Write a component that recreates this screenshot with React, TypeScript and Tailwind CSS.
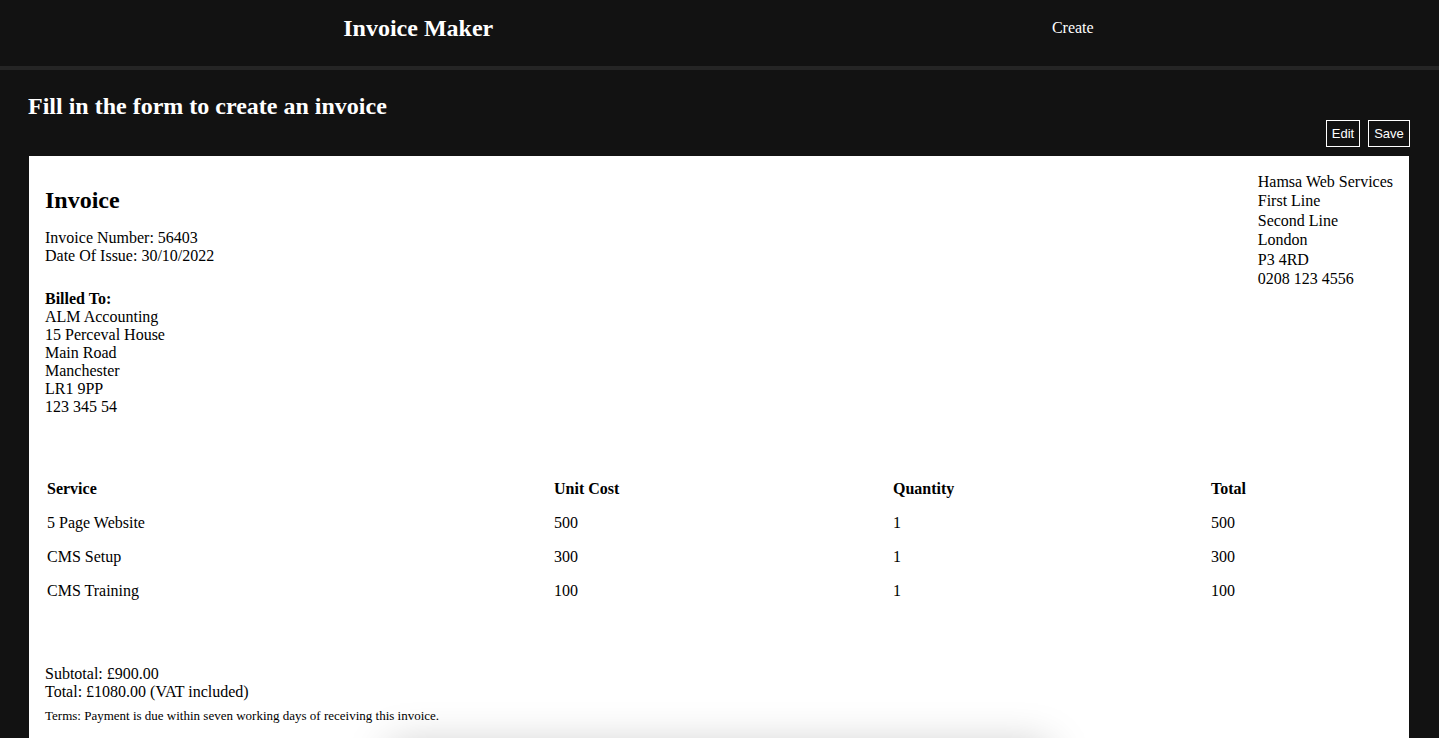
import React from 'react';

const serif = { fontFamily: '"Liberation Serif", "Times New Roman", serif' };

const items = [
  { service: '5 Page Website', cost: 500, qty: 1, total: 500 },
  { service: 'CMS Setup', cost: 300, qty: 1, total: 300 },
  { service: 'CMS Training', cost: 100, qty: 1, total: 100 },
];

const sender = ['Hamsa Web Services', 'First Line', 'Second Line', 'London', 'P3 4RD', '0208 123 4556'];
const billedTo = ['ALM Accounting', '15 Perceval House', 'Main Road', 'Manchester', 'LR1 9PP', '123 345 54'];

function Header() {
  return (
    <header className="grid h-[70px] grid-cols-2 border-b-4 border-[#252525] pl-[91px] pr-[39px] pb-[10px] text-white">
      <div className="flex items-center justify-center">
        <h1 className="text-[24px] font-bold leading-[28px]">Invoice Maker</h1>
      </div>
      <nav className="flex items-center justify-center">
        <a className="text-[16px] leading-[18px]">Create</a>
      </nav>
    </header>
  );
}

function InvoiceTable() {
  const cols = 'grid grid-cols-[507px_339px_318px_1fr] h-[34px] items-center pl-[2px]';
  return (
    <div className="mt-[56px]">
      <div className={`${cols} font-bold`}>
        <span>Service</span>
        <span>Unit Cost</span>
        <span>Quantity</span>
        <span>Total</span>
      </div>
      {items.map((it) => (
        <div key={it.service} className={cols}>
          <span>{it.service}</span>
          <span>{it.cost}</span>
          <span>{it.qty}</span>
          <span>{it.total}</span>
        </div>
      ))}
    </div>
  );
}

export default function App() {
  return (
    <div className="min-h-[738px] overflow-hidden bg-[#121212]" style={serif}>
      <Header />
      <main className="pl-[29px] pr-[30px] pt-[22px]">
        <h2 className="-ml-px text-[24px] font-bold leading-[28px] text-white">Fill in the form to create an invoice</h2>
        <div className="flex justify-end gap-2" style={{ fontFamily: '"Liberation Sans", Arial, sans-serif' }}>
          <button className="w-[34px] border border-white py-[5px] text-center text-[13px] leading-[15px] text-white">Edit</button>
          <button className="-mr-px w-[42px] border border-white py-[5px] text-center text-[13px] leading-[15px] text-white">Save</button>
        </div>

        <section className="mt-[9px] bg-white p-4 text-[16px] leading-[18px] text-black">
          <div className="flex justify-between">
            <div>
              <h3 className="mt-[14px] text-[24px] font-bold leading-[28px]">Invoice</h3>
              <p className="mt-[15px]">Invoice Number: 56403</p>
              <p>Date Of Issue: 30/10/2022</p>
              <div className="mt-[25px]">
                <p className="font-bold">Billed To:</p>
                {billedTo.map((l) => (
                  <p key={l}>{l}</p>
                ))}
              </div>
            </div>
            <div className="leading-[19.4px]">
              {sender.map((l) => (
                <p key={l}>{l}</p>
              ))}
            </div>
          </div>

          <InvoiceTable />

          <div className="mt-[57px]">
            <p>Subtotal: £900.00</p>
            <p>Total: £1080.00 (VAT included)</p>
            <p className="mt-[7px] text-[13px] leading-[15px]">
              Terms: Payment is due within seven working days of receiving this invoice.
            </p>
          </div>

          <div className="mx-auto mt-[22px] h-[200px] w-[660px] bg-white shadow-[0_0_40px_rgba(0,0,0,0.22)]" />
        </section>
      </main>
    </div>
  );
}
